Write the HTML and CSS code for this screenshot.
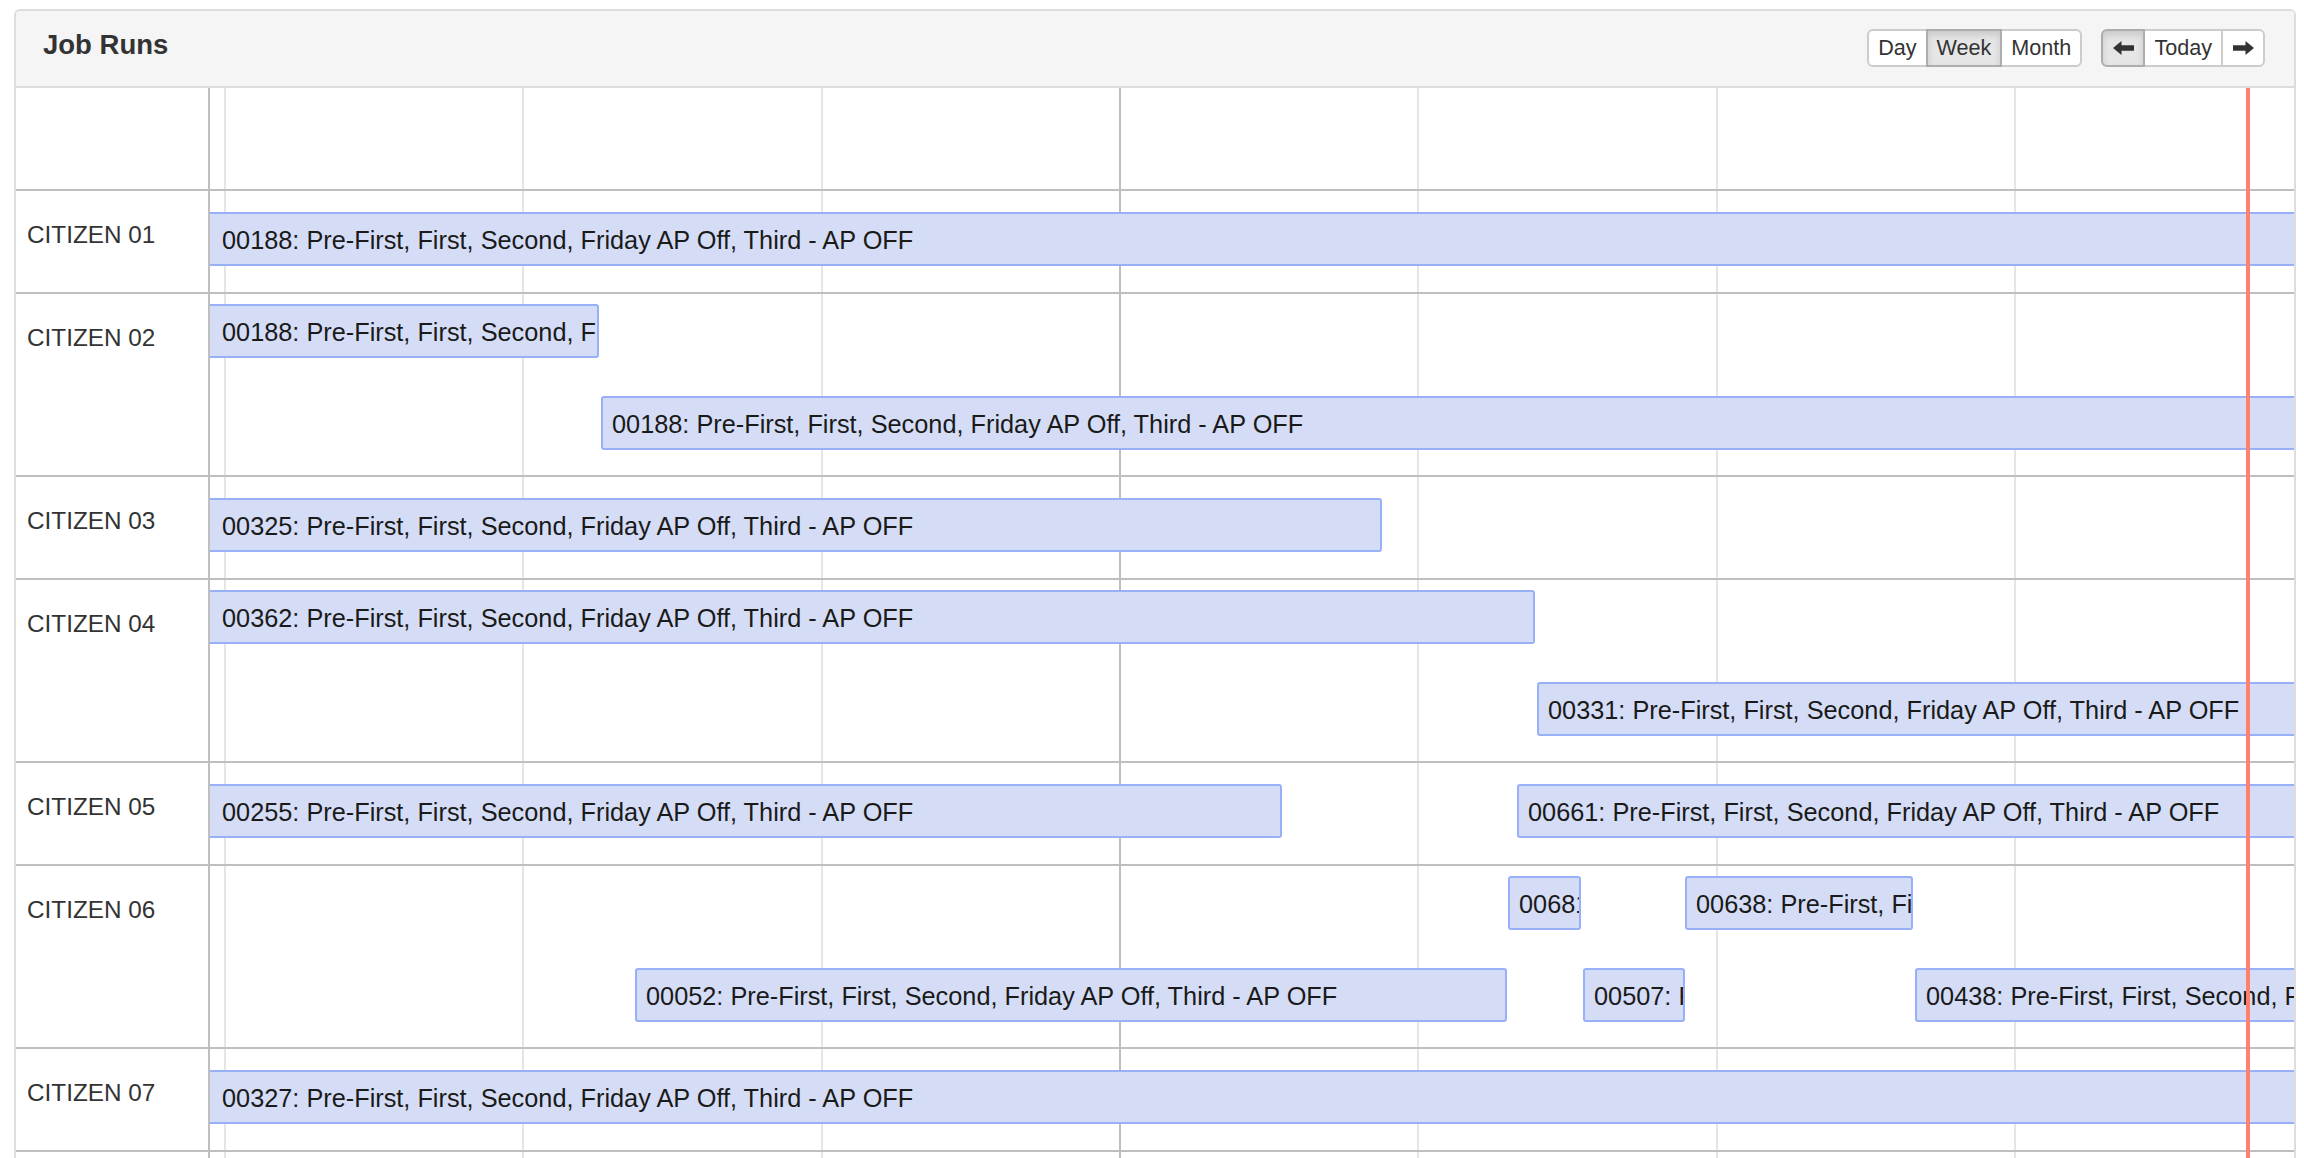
FILE: index.html
```html
<!DOCTYPE html>
<html lang="en">
<head>
<meta charset="utf-8">
<title>Job Runs</title>
<link rel="stylesheet" href="styles.css">
</head>
<body>
<div class="panel">
  <div class="panel-heading">
    <h3 class="title">Job Runs</h3>
    <div class="toolbar">
      <div class="btn-group">
        <button class="btn">Day</button>
        <button class="btn active">Week</button>
        <button class="btn">Month</button>
      </div>
      <div class="btn-group">
        <button class="btn btn-icon active" aria-label="Previous">
          <svg class="arrow" viewBox="0 0 21 14" width="21" height="14"><path d="M0 7 L8.5 0 L8.5 4.3 L21 4.3 L21 9.7 L8.5 9.7 L8.5 14 Z"/></svg>
        </button>
        <button class="btn">Today</button>
        <button class="btn btn-icon" aria-label="Next">
          <svg class="arrow" viewBox="0 0 21 14" width="21" height="14"><path d="M21 7 L12.5 0 L12.5 4.3 L0 4.3 L0 9.7 L12.5 9.7 L12.5 14 Z"/></svg>
        </button>
      </div>
    </div>
  </div>

  <div class="timeline">
    <div class="grid">
      <div class="vline" style="left:14px"></div>
      <div class="vline" style="left:312px"></div>
      <div class="vline" style="left:611px"></div>
      <div class="vline major" style="left:909px"></div>
      <div class="vline" style="left:1207px"></div>
      <div class="vline" style="left:1506px"></div>
      <div class="vline" style="left:1804px"></div>
    </div>

    <div class="row axis">
      <div class="label"></div>
      <div class="lane"></div>
    </div>

    <div class="row">
      <div class="label">CITIZEN 01</div>
      <div class="lane">
        <div class="bar from-start open-end top-s" style="left:0">00188: Pre-First, First, Second, Friday AP Off, Third - AP OFF</div>
      </div>
    </div>

    <div class="row double">
      <div class="label">CITIZEN 02</div>
      <div class="lane">
        <div class="bar from-start top-1" style="left:0;width:389px">00188: Pre-First, First, Second, Friday AP Off, Third - AP OFF</div>
        <div class="bar open-end top-2" style="left:391px">00188: Pre-First, First, Second, Friday AP Off, Third - AP OFF</div>
      </div>
    </div>

    <div class="row">
      <div class="label">CITIZEN 03</div>
      <div class="lane">
        <div class="bar from-start top-s" style="left:0;width:1172px">00325: Pre-First, First, Second, Friday AP Off, Third - AP OFF</div>
      </div>
    </div>

    <div class="row double">
      <div class="label">CITIZEN 04</div>
      <div class="lane">
        <div class="bar from-start top-1" style="left:0;width:1325px">00362: Pre-First, First, Second, Friday AP Off, Third - AP OFF</div>
        <div class="bar open-end top-2" style="left:1327px">00331: Pre-First, First, Second, Friday AP Off, Third - AP OFF</div>
      </div>
    </div>

    <div class="row">
      <div class="label">CITIZEN 05</div>
      <div class="lane">
        <div class="bar from-start top-s" style="left:0;width:1072px">00255: Pre-First, First, Second, Friday AP Off, Third - AP OFF</div>
        <div class="bar open-end top-s" style="left:1307px">00661: Pre-First, First, Second, Friday AP Off, Third - AP OFF</div>
      </div>
    </div>

    <div class="row double">
      <div class="label">CITIZEN 06</div>
      <div class="lane">
        <div class="bar top-1" style="left:1298px;width:73px">00681: Pre-First, First, Second, Friday AP Off, Third - AP OFF</div>
        <div class="bar top-1" style="left:1475px;width:228px">00638: Pre-First, First, Second, Friday AP Off, Third - AP OFF</div>
        <div class="bar top-2" style="left:425px;width:872px">00052: Pre-First, First, Second, Friday AP Off, Third - AP OFF</div>
        <div class="bar top-2" style="left:1373px;width:102px">00507: Pre-First, First, Second, Friday AP Off, Third - AP OFF</div>
        <div class="bar open-end top-2" style="left:1705px">00438: Pre-First, First, Second, Friday AP Off, Third - AP OFF</div>
      </div>
    </div>

    <div class="row">
      <div class="label">CITIZEN 07</div>
      <div class="lane">
        <div class="bar from-start open-end top-s" style="left:0">00327: Pre-First, First, Second, Friday AP Off, Third - AP OFF</div>
      </div>
    </div>

    <div class="row">
      <div class="label"></div>
      <div class="lane"></div>
    </div>

    <div class="now"></div>
  </div>
</div>
</body>
</html>
```

FILE: styles.css
```css
* {
  box-sizing: border-box;
}

html,
body {
  margin: 0;
  padding: 0;
  background: #ffffff;
}

body {
  font-family: "Liberation Sans", Arial, Helvetica, sans-serif;
  color: #333333;
}

.panel {
  margin: 9px 0 0 14px;
  width: 2282px;
  border: 2px solid #dddddd;
  border-radius: 6px;
  overflow: hidden;
  background: #ffffff;
}

.panel-heading {
  height: 77px;
  padding: 18px 29px 0 27px;
  background: #f5f5f5;
  border-bottom: 2px solid #dddddd;
  display: flex;
  justify-content: space-between;
  align-items: flex-start;
}

.title {
  margin: 0;
  font-size: 27.5px;
  line-height: 32px;
  font-weight: bold;
  color: #333333;
}

.toolbar {
  display: flex;
  gap: 19px;
}

.btn-group {
  display: flex;
}

.btn {
  height: 38px;
  padding: 0 9px;
  margin: 0;
  font-family: "Liberation Sans", Arial, Helvetica, sans-serif;
  font-size: 21.6px;
  line-height: 34px;
  color: #333333;
  background: #ffffff;
  border: 2px solid #cccccc;
  border-radius: 0;
  display: flex;
  align-items: center;
  justify-content: center;
  position: relative;
}

.btn + .btn {
  margin-left: -2px;
}

.btn:first-child {
  border-radius: 6px 0 0 6px;
}

.btn:last-child {
  border-radius: 0 6px 6px 0;
}

.btn.active {
  background: #e6e6e6;
  border-color: #adadad;
  box-shadow: inset 0 4px 7px rgba(0, 0, 0, 0.125);
  z-index: 1;
}

.btn-icon {
  width: 44px;
  padding: 0;
}

.arrow {
  display: block;
  fill: #333333;
}

.timeline {
  position: relative;
}

.grid {
  position: absolute;
  top: 0;
  bottom: 0;
  left: 194px;
  right: 0;
  z-index: 0;
}

.vline {
  position: absolute;
  top: 0;
  bottom: 0;
  width: 2px;
  background: #e5e5e5;
}

.vline.major {
  background: #bfbfbf;
}

.row {
  display: flex;
  position: relative;
  z-index: 1;
  height: 103px;
  border-top: 2px solid #bfbfbf;
}

.row.axis {
  height: 101px;
  border-top: none;
}

.row.double {
  height: 183px;
}

.label {
  flex: none;
  width: 194px;
  border-right: 2px solid #bfbfbf;
  padding: 30px 0 0 11px;
  font-size: 24.3px;
  line-height: 28px;
  color: #333333;
  white-space: nowrap;
  background: #ffffff;
}

.lane {
  flex: 1;
  position: relative;
  overflow: hidden;
}

.bar {
  position: absolute;
  height: 54px;
  padding: 3px 9px 0;
  background: #d5ddf6;
  border: 2px solid #97b0f8;
  border-radius: 3px;
  font-size: 25.3px;
  line-height: 47px;
  color: #1a1a1a;
  white-space: nowrap;
  overflow: hidden;
}

.bar.from-start {
  border-left-width: 0;
  border-top-left-radius: 0;
  border-bottom-left-radius: 0;
  padding-left: 12px;
}

.bar.open-end {
  right: -40px;
}

.top-s {
  top: 21px;
}

.top-1 {
  top: 10px;
}

.top-2 {
  top: 102px;
}

.now {
  position: absolute;
  top: 0;
  bottom: 0;
  left: 2230px;
  width: 4px;
  background: #ff806e;
  z-index: 2;
}
```
